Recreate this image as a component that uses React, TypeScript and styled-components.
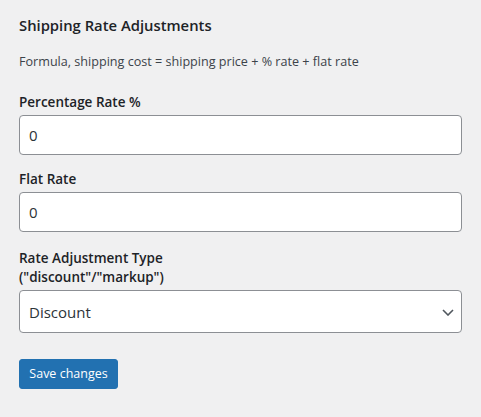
import React from "react";
import styled, { createGlobalStyle } from "styled-components";

const Global = createGlobalStyle`
  html, body { margin: 0; padding: 0; background: #f0f0f1; }
  body { font-family: "Open Sans", "Noto Sans", sans-serif; color: #1d2327; }
  * { box-sizing: border-box; }
`;

const Panel = styled.form`
  display: flex;
  flex-direction: column;
  padding: 13px 19px 0 19px;
  width: 481px;
`;

const Title = styled.h2`
  margin: 0;
  font-size: 14.8px;
  font-weight: 600;
  line-height: 24px;
  color: #1d2327;
`;

const Note = styled.p`
  margin: 15px 0 0;
  font-size: 12.6px;
  line-height: 20px;
  color: #3c434a;
`;

const Field = styled.div<{ $gap: number }>`
  display: flex;
  flex-direction: column;
  margin-top: ${(p) => p.$gap}px;
`;

const Label = styled.label`
  font-size: 13.5px;
  font-weight: 600;
  line-height: 19px;
  color: #1d2327;
  margin-bottom: 3px;
`;

const TextInput = styled.input`
  width: 443px;
  height: 40px;
  border: 1px solid #8c8f94;
  border-radius: 4px;
  background: #fff;
  padding: 0 9px;
  font-family: inherit;
  font-size: 15px;
  color: #2c3338;
  outline: none;
`;

const SelectWrap = styled.div`
  position: relative;
  width: 443px;
`;

const Select = styled.select`
  width: 443px;
  height: 43px;
  appearance: none;
  -webkit-appearance: none;
  border: 1px solid #8c8f94;
  border-radius: 4px;
  background: #fff;
  padding: 0 30px 0 9px;
  font-family: inherit;
  font-size: 15px;
  color: #2c3338;
  outline: none;
`;

const Chevron = styled.svg`
  position: absolute;
  right: 8px;
  top: 19px;
  pointer-events: none;
`;

const Button = styled.button`
  align-self: flex-start;
  margin-top: 26px;
  height: 30px;
  width: 99px;
  padding: 0;
  border: 1px solid #2271b1;
  border-radius: 3px;
  background: #2271b1;
  color: #fff;
  font-family: inherit;
  font-size: 12.5px;
  line-height: 28px;
  cursor: pointer;
`;

export default function App() {
  return (
    <>
      <Global />
      <Panel onSubmit={(e) => e.preventDefault()}>
        <Title>Shipping Rate Adjustments</Title>
        <Note>Formula, shipping cost = shipping price + % rate + flat rate</Note>
        <Field $gap={21}>
          <Label>Percentage Rate %</Label>
          <TextInput defaultValue="0" />
        </Field>
        <Field $gap={15}>
          <Label>Flat Rate</Label>
          <TextInput defaultValue="0" />
        </Field>
        <Field $gap={17}>
          <Label>
            Rate Adjustment Type
            <br />
            ("discount"/"markup")
          </Label>
          <SelectWrap>
            <Select defaultValue="discount">
              <option value="discount">Discount</option>
              <option value="markup">Markup</option>
            </Select>
            <Chevron width="12" height="7" viewBox="0 0 12 7">
              <path d="M1 1 L6 6 L11 1" fill="none" stroke="#50575e" strokeWidth="1.6" />
            </Chevron>
          </SelectWrap>
        </Field>
        <Button type="submit">Save changes</Button>
      </Panel>
    </>
  );
}
